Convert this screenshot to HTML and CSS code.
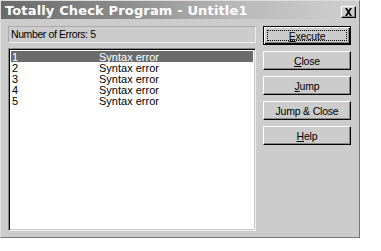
FILE: index.html
```html
<!DOCTYPE html>
<html>
<head>
<meta charset="utf-8">
<link rel="stylesheet" href="styles.css">
</head>
<body>
<div class="window">
  <div class="titlebar">
    <span class="title">Totally Check Program - Untitle1</span>
    <span class="closebtn">
      <svg width="9" height="8" viewBox="0 0 9 8"><path d="M1 0h2l1.5 2.5L6 0h2L5.5 4 8 8H6L4.5 5.5 3 8H1l2.5-4z" fill="#000"/></svg>
    </span>
  </div>
  <div class="content">
    <div class="left">
      <div class="errcount">Number of Errors: 5</div>
      <div class="list">
        <div class="row selected"><span class="num">1</span><span class="msg">Syntax error</span></div>
        <div class="row"><span class="num">2</span><span class="msg">Syntax error</span></div>
        <div class="row"><span class="num">3</span><span class="msg">Syntax error</span></div>
        <div class="row"><span class="num">4</span><span class="msg">Syntax error</span></div>
        <div class="row"><span class="num">5</span><span class="msg">Syntax error</span></div>
      </div>
    </div>
    <div class="buttons">
      <div class="btn default"><span class="focus"><u>E</u>xecute</span></div>
      <div class="btn"><span><u>C</u>lose</span></div>
      <div class="btn"><span><u>J</u>ump</span></div>
      <div class="btn"><span>Jump &amp; Close</span></div>
      <div class="btn"><span><u>H</u>elp</span></div>
    </div>
  </div>
</div>
</body>
</html>
```
FILE: styles.css
```css
html, body {
  margin: 0;
  padding: 0;
  background: #ffffff;
}
.window {
  width: 360px;
  height: 238px;
  box-sizing: border-box;
  background: #cccccc;
  border-top: 1px solid #dddddd;
  border-left: 1px solid #dddddd;
  border-right: 1px solid #777777;
  border-bottom: 1px solid #777777;
  font-family: "Liberation Sans", Arial, sans-serif;
  color: #000;
}
.titlebar {
  height: 18px;
  background: linear-gradient(to right, #6a6a6a 0%, #8c8c8c 35%, #b8b8b8 65%, #d0d0d0 100%);
  display: flex;
  align-items: center;
  justify-content: space-between;
  padding: 0 3px 0 4px;
}
.title {
  color: #ffffff;
  font-family: "DejaVu Sans", Verdana, sans-serif;
  font-weight: bold;
  font-size: 13px;
  letter-spacing: 0.15px;
  line-height: 18px;
  padding-top: 1px;
  white-space: nowrap;
}
.closebtn {
  width: 15px;
  height: 12px;
  margin-top: 4px;
  box-sizing: border-box;
  border-top: 1px solid #ffffff;
  border-left: 1px solid #ffffff;
  border-right: 1px solid #000000;
  border-bottom: 1px solid #000000;
  background: #cccccc;
  box-shadow: inset -1px -1px 0 #888888;
  display: flex;
  align-items: center;
  justify-content: center;
}
.content {
  display: flex;
  padding: 7px 0 0 7px;
  gap: 7px;
}
.left {
  width: 248px;
  display: flex;
  flex-direction: column;
  gap: 5px;
}
.errcount {
  height: 17px;
  box-sizing: border-box;
  border-top: 1px solid #aaaaaa;
  border-left: 1px solid #aaaaaa;
  border-right: 1px solid #eeeeee;
  border-bottom: 1px solid #eeeeee;
  font-size: 10.5px;
  line-height: 15px;
  padding-left: 2px;
  letter-spacing: -0.4px;
}
.list {
  height: 183px;
  box-sizing: border-box;
  background: #ffffff;
  border-top: 1px solid #888888;
  border-left: 1px solid #888888;
  border-right: 1px solid #eeeeee;
  border-bottom: 1px solid #eeeeee;
  box-shadow: inset 1px 1px 0 #000000, inset -1px -1px 0 #cccccc;
  padding: 2px 2px 0 2px;
}
.row {
  height: 11px;
  display: flex;
  font-size: 11px;
  line-height: 12px;
}
.row.selected {
  background: #6b6b6b;
  color: #ffffff;
}
.num {
  width: 87px;
  padding-left: 1px;
}
.buttons {
  width: 88px;
  display: flex;
  flex-direction: column;
  gap: 6px;
}
.btn {
  height: 19px;
  box-sizing: border-box;
  border-top: 1px solid #ffffff;
  border-left: 1px solid #ffffff;
  border-right: 1px solid #000000;
  border-bottom: 1px solid #000000;
  box-shadow: inset -1px -1px 0 #888888;
  display: flex;
  align-items: center;
  justify-content: center;
  font-size: 10.5px;
  letter-spacing: -0.2px;
}
.btn.default {
  border: 1px solid #000000;
  box-shadow: inset 1px 1px 0 #ffffff, inset -1px -1px 0 #000000, inset -2px -2px 0 #888888;
  padding: 3px;
}
.focus {
  flex: 1;
  align-self: stretch;
  border: 1px dotted #000000;
  display: flex;
  align-items: center;
  justify-content: center;
}
u {
  text-decoration: underline;
}
```
